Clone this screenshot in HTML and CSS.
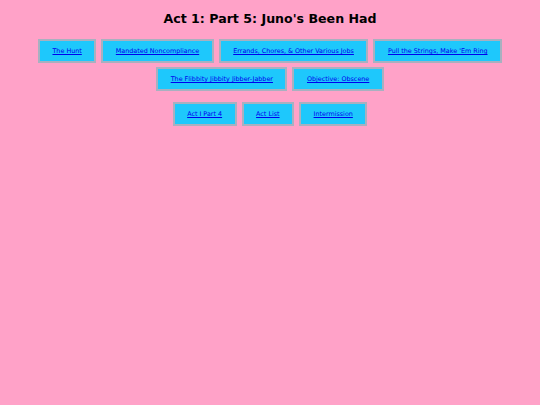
FILE: index.html
```html
<!DOCTYPE html>
<html>
<head>
<meta charset="utf-8">
<link rel="stylesheet" href="styles.css">
</head>
<body>
<h1 class="title">Act 1: Part 5: Juno's Been Had</h1>
<nav class="group">
  <a class="btn" href="#">The Hunt</a>
  <a class="btn" href="#">Mandated Noncompliance</a>
  <a class="btn" href="#">Errands, Chores, &amp; Other Various Jobs</a>
  <a class="btn" href="#">Pull the Strings, Make 'Em Ring</a>
  <a class="btn" href="#">The Flibbity Jibbity Jibber-Jabber</a>
  <a class="btn" href="#">Objective: Obscene</a>
</nav>
<nav class="group nav2">
  <a class="btn" href="#">Act I Part 4</a>
  <a class="btn" href="#">Act List</a>
  <a class="btn" href="#">Intermission</a>
</nav>
</body>
</html>
```

FILE: styles.css
```css
html, body {
  margin: 0;
  padding: 0;
  background: #ffa2c8;
}
body {
  width: 540px;
  height: 405px;
  font-family: "Comic Sans MS", "DejaVu Sans", sans-serif;
}
.title {
  margin: 0;
  padding-top: 10px;
  height: 30px;
  box-sizing: border-box;
  text-align: center;
  font-size: 12.6px;
  line-height: 18px;
  font-weight: bold;
  color: #000;
}
.group {
  display: flex;
  flex-wrap: wrap;
  justify-content: center;
  gap: 4px 5px;
  margin: 9px 16px 0;
}
.nav2 {
  margin-top: 11px;
}
.btn {
  display: block;
  background: #1ec8fc;
  border: 2px solid #a8b0c0;
  padding: 6px 12.5px;
  font-size: 6.4px;
  line-height: 8px;
  color: #0000ee;
  text-decoration: underline;
}
```
